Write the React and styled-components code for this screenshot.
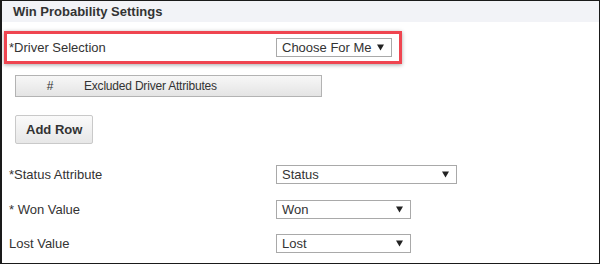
import React from "react";
import styled, { createGlobalStyle } from "styled-components";

const Global = createGlobalStyle`
  html, body { margin: 0; padding: 0; background: #fff; }
  body { font-family: "Liberation Sans", Arial, sans-serif; color: #333; }
`;

const Frame = styled.div`
  box-sizing: border-box;
  width: 600px;
  height: 264px;
  border: 1px solid #1a1a1a;
  border-left-width: 2px;
  background: #fff;
  overflow: hidden;
`;

const Header = styled.div`
  height: 21px;
  line-height: 22px;
  background: #f2f3f7;
  padding-left: 11px;
  font-size: 13px;
  font-weight: bold;
  color: #333;
`;

const Body = styled.div`
  padding: 9px 0 0 2px;
`;

const Highlight = styled.div`
  box-sizing: border-box;
  width: 398px;
  height: 33px;
  border: 3px solid #ef4550;
  box-shadow: 0 1px 4px rgba(0, 0, 0, 0.35);
  padding-left: 2px;
  display: flex;
  align-items: center;
`;

const Field = styled.div`
  display: flex;
  align-items: center;
  height: ${(p) => p.$h || 35}px;
  padding-left: ${(p) => p.$pad || 0}px;
`;

const Label = styled.div`
  width: 267px;
  font-size: 13px;
  color: #333;
`;

const Select = styled.div`
  box-sizing: border-box;
  width: ${(p) => p.$w}px;
  height: 19px;
  border: 1px solid #a9a9a9;
  background: #fff;
  display: flex;
  align-items: center;
  justify-content: space-between;
  padding: 0 7px 0 5px;
  font-size: 13px;
  color: #333;
`;

const Arrow = styled.svg`
  width: 7px;
  height: 7px;
  flex: none;
`;

const TableHead = styled.div`
  box-sizing: border-box;
  width: 307px;
  height: 22px;
  margin: 11px 0 0 11px;
  border: 1px solid #b3b3b3;
  background: linear-gradient(#f7f7f7, #e4e4e4);
  display: flex;
  align-items: center;
  font-size: 12px;
  letter-spacing: -0.2px;
  color: #333;
`;

const Cell = styled.div`
  width: ${(p) => p.$w}px;
  text-align: ${(p) => p.$align || "left"};
`;

const Button = styled.button`
  box-sizing: border-box;
  display: block;
  height: 29px;
  margin: 18px 0 13px 11px;
  padding: 0 10px;
  border: 1px solid #c9c9c9;
  border-radius: 2px;
  background: linear-gradient(#fafafa, #e7e7e7);
  font-family: "Liberation Sans", Arial, sans-serif;
  font-size: 13px;
  font-weight: bold;
  color: #333;
`;

const Caret = () => (
  <Arrow viewBox="0 0 7 7">
    <path d="M0 0.5 H7 L3.5 6.5 Z" fill="#222" />
  </Arrow>
);

const Dropdown = ({ w, children }) => (
  <Select $w={w}>
    <span>{children}</span>
    <Caret />
  </Select>
);

export default function App() {
  return (
    <>
      <Global />
      <Frame>
        <Header>Win Probability Settings</Header>
        <Body>
          <Highlight>
            <Label>*Driver Selection</Label>
            <Dropdown w={116}>Choose For Me</Dropdown>
          </Highlight>
          <TableHead>
            <Cell $w={68} $align="center">#</Cell>
            <Cell $w={220}>Excluded Driver Attributes</Cell>
          </TableHead>
          <Button>Add Row</Button>
          <Field $pad={5} $h={35}>
            <Label>*Status Attribute</Label>
            <Dropdown w={181}>Status</Dropdown>
          </Field>
          <Field $pad={5} $h={34}>
            <Label>* Won Value</Label>
            <Dropdown w={135}>Won</Dropdown>
          </Field>
          <Field $pad={5} $h={34}>
            <Label>Lost Value</Label>
            <Dropdown w={135}>Lost</Dropdown>
          </Field>
        </Body>
      </Frame>
    </>
  );
}
